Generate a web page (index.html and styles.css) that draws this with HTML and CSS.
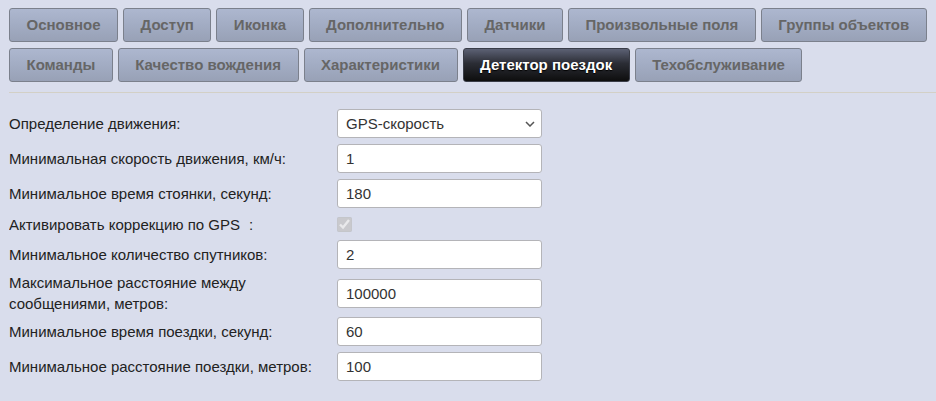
FILE: index.html
```html
<!DOCTYPE html>
<html lang="ru">
  <head>
    <meta charset="UTF-8" />
    <title>Детектор поездок</title>
    <link rel="stylesheet" href="styles.css">
  </head>
  <body>
    <div class="tabs">
      <div class="tab-row">
        <div class="tab">Основное</div>
        <div class="tab">Доступ</div>
        <div class="tab">Иконка</div>
        <div class="tab">Дополнительно</div>
        <div class="tab">Датчики</div>
        <div class="tab">Произвольные поля</div>
        <div class="tab">Группы объектов</div>
      </div>
      <div class="tab-row">
        <div class="tab">Команды</div>
        <div class="tab">Качество вождения</div>
        <div class="tab">Характеристики</div>
        <div class="tab tab-active">Детектор поездок</div>
        <div class="tab">Техобслуживание</div>
      </div>
    </div>

    <div class="form">
      <label class="label">Определение движения:</label>
      <div class="control">
        <div class="select-wrap">
          <select class="field">
            <option>GPS-скорость</option>
          </select>
          <svg class="chevron" width="10" height="6" viewBox="0 0 10 6">
            <path d="M1 1 L5 5 L9 1" fill="none" stroke="#555" stroke-width="1.5" />
          </svg>
        </div>
      </div>

      <label class="label">Минимальная скорость движения, км/ч:</label>
      <div class="control"><input class="field" type="text" value="1"></div>

      <label class="label">Минимальное время стоянки, секунд:</label>
      <div class="control"><input class="field" type="text" value="180"></div>

      <label class="label">Активировать коррекцию по GPS<span class="colon">:</span></label>
      <div class="control"><input class="check" type="checkbox" checked disabled></div>

      <label class="label">Минимальное количество спутников:</label>
      <div class="control"><input class="field" type="text" value="2"></div>

      <label class="label">Максимальное расстояние между<br>сообщениями, метров:</label>
      <div class="control"><input class="field" type="text" value="100000"></div>

      <label class="label">Минимальное время поездки, секунд:</label>
      <div class="control"><input class="field" type="text" value="60"></div>

      <label class="label">Минимальное расстояние поездки, метров:</label>
      <div class="control"><input class="field" type="text" value="100"></div>
    </div>
  </body>
</html>
```

FILE: styles.css
```css
body {
  margin: 8px 0 0 9px;
  background-color: #d9ddec;
  font-family: "Liberation Sans", Arial, sans-serif;
  font-size: 15px;
  color: #222;
}
.tabs {
  display: flex;
  flex-direction: column;
  gap: 6px;
  padding-bottom: 10px;
  border-bottom: 1px solid #d3d0c6;
}
.tab-row {
  display: flex;
  gap: 5px;
}
.tab {
  flex-shrink: 0;
  height: 32px;
  line-height: 32px;
  padding: 0 16.5px;
  border: 1px solid #7b808c;
  border-radius: 3px;
  background: linear-gradient(to bottom, #adb7cf 0%, #a2acc3 50%, #98a1b6 100%);
  color: #666;
  font-weight: bold;
  white-space: nowrap;
  cursor: pointer;
}
.tab-active {
  border-color: #3a3d48;
  background: linear-gradient(to bottom, #5c6174 0%, #2b2d35 45%, #0e0e0e 100%);
  color: #fff;
  text-shadow: 0 1px 1px #000;
}
.form {
  display: grid;
  grid-template-columns: 328px 205px;
  grid-template-rows: 35px 35px 35px 26px 35px 42px 35px 35px;
  margin-top: 13px;
}
.label {
  display: flex;
  align-items: center;
  line-height: 21px;
}
.colon {
  margin-left: 9px;
}
.control {
  display: flex;
  align-items: center;
}
.field {
  box-sizing: border-box;
  width: 205px;
  height: 29px;
  margin: 0;
  padding: 0 8px;
  border: 1px solid #b4b4b8;
  border-radius: 3px;
  background: #fff;
  font-family: "Liberation Sans", Arial, sans-serif;
  font-size: 15px;
  color: #333;
  outline: none;
}
select.field {
  appearance: none;
  -webkit-appearance: none;
}
.select-wrap {
  position: relative;
}
.chevron {
  position: absolute;
  right: 7px;
  top: 12px;
  pointer-events: none;
}
.check {
  width: 15px;
  height: 15px;
  margin: 0;
}
```
